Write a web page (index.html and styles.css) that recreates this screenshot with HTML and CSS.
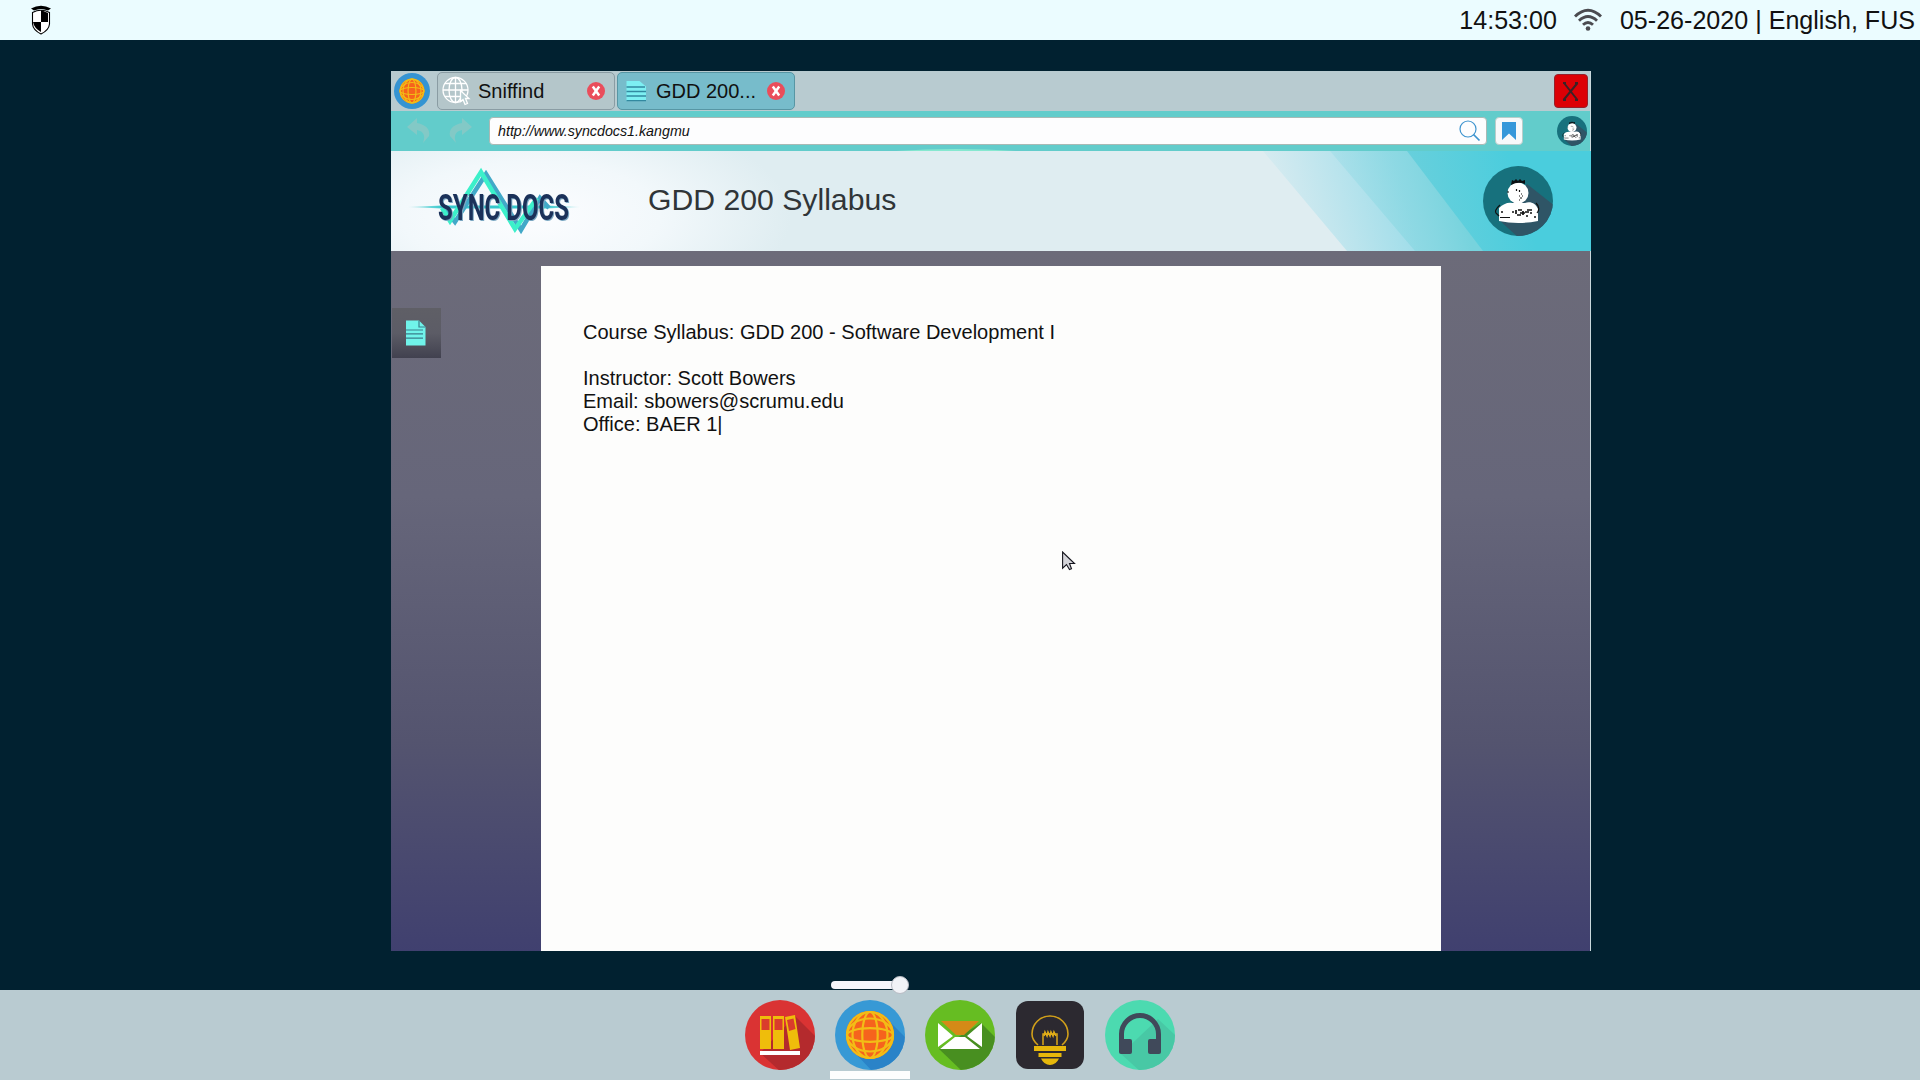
FILE: index.html
```html
<!DOCTYPE html>
<html lang="en">
<head>
<meta charset="utf-8">
<title>Sync Docs</title>
<link rel="stylesheet" href="styles.css">
</head>
<body>
<svg class="defs" width="0" height="0">
  <defs>
    <symbol id="avatar" viewBox="0 0 70 70">
      <clipPath id="disc"><circle cx="35" cy="35" r="35"/></clipPath>
      <circle cx="35" cy="35" r="35" fill="#17717d"/>
      <path clip-path="url(#disc)" d="M44 18 72 40V72H36L16 54Z" fill="#2f5566"/>
      <path d="M16 57V52V42C20 38 25 36 29 37H42C48 35 53 38 55 43V55Q35 59 16 55Z" fill="#fff"/>
      <circle cx="35" cy="27" r="10.500" fill="#fff"/>
      <path d="M28 19 29 14 31 15 33 13 35 15 37 13 39 15 42 14 42 18Q35 15 28 19Z" fill="#0a0f12"/>
      <path d="M24 26h2M33.500 23v2M36.500 24v2M38 28h1M36 30h1M39 30h1M37 32h2M36 34h1" stroke="#111" stroke-width="1.200" fill="none"/>
      <path d="M17 39Q10 45 14 48L16 50M53 37Q58 42 54 47M17 51.500H27" stroke="#111" stroke-width="1.200" fill="none"/>
      <path d="M29 46H31M33 44V48M35 44H39M34 49H38M40 45V49M42 46H46M44 44H49M43 50H45M47 47H49M37 47H42M51 51H53M18 46h2" stroke="#111" stroke-width="1.700" fill="none"/>
    </symbol>
    <symbol id="globe" viewBox="0 0 70 70">
      <circle cx="35" cy="35" r="24" fill="#f6631d"/>
      <g fill="none" stroke="#f2bd16" stroke-width="2.200">
        <circle cx="35" cy="35" r="23"/>
        <ellipse cx="35" cy="35" rx="7.700" ry="23"/>
        <ellipse cx="35" cy="35" rx="17.500" ry="23"/>
        <ellipse cx="35" cy="35" rx="23" ry="6.800"/>
        <ellipse cx="35" cy="35" rx="23" ry="16.500"/>
      </g>
    </symbol>
  </defs>
</svg>

<header class="menubar">
  <svg class="crest" width="20" height="30" viewBox="0 0 20 30">
    <path d="M0 3.500Q10-2 20 3.500L17 5.500Q10 2.500 3 5.500Z" fill="#000"/>
    <path d="M1.500 7.500Q10 3 18.500 7.500V19Q18 25 10 29Q2 25 1.500 19Z" fill="#fff" stroke="#000" stroke-width="1.100"/>
    <path d="M10 5V17H17V8ZM10 17V27Q3 23 2 17Z" fill="#000"/>
  </svg>
  <div class="status">
    <span>14:53:00</span>
    <svg class="wifi" width="28" height="24" viewBox="0 0 28 24">
      <g fill="none" stroke="#4b4b50" stroke-width="2.900">
        <path d="M1 8.500Q14-4 27 8.500M5 12.700Q14 4.300 23 12.700M9 16.700Q14 12.100 19 16.700"/>
      </g>
      <circle cx="14" cy="20.500" r="2.300" fill="#4b4b50"/>
    </svg>
    <span>05-26-2020 | English, FUS</span>
  </div>
</header>

<main class="desktop">
  <section class="window">
    <div class="tabs">
      <svg class="app" width="36" height="36" viewBox="0 0 70 70"><circle cx="35" cy="35" r="35" fill="#3594d2"/><use href="#globe"/></svg>
      <div class="tab">
        <svg width="29" height="30" viewBox="0 0 29 30" fill="none" stroke="#fff" stroke-width="1.300">
          <circle cx="13.500" cy="14" r="12.500"/><ellipse cx="13.500" cy="14" rx="6.500" ry="12.500"/>
          <path d="M1 14H26M3 7.500H24M3 20.500H24M13.500 1V27"/>
          <path d="M18.500 14.500V25.500L21 23.500 23 28.500 25.500 27.500 23.500 22.500H27Z" fill="#b7cdd1"/>
        </svg>
        <span class="label">Sniffind</span>
        <svg class="x" width="18" height="18" viewBox="0 0 18 18"><circle cx="9" cy="9" r="9" fill="#ea4d5b"/><path d="M5.800 4.500 12.200 13.500M12.200 4.500 5.800 13.500" stroke="#fff" stroke-width="2.500"/></svg>
      </div>
      <div class="tab active">
        <svg width="29" height="30" viewBox="0 0 29 30">
          <path d="M4.500 5H17.500L24 10.500V25H4.500Z" fill="#7deff2"/>
          <path d="M4.500 11H23M4.500 15.500H24M4.500 20H24M4.500 24.700H24" stroke="#3289a0" stroke-width="1.300"/>
        </svg>
        <span class="label">GDD 200...</span>
        <svg class="x" width="18" height="18" viewBox="0 0 18 18"><circle cx="9" cy="9" r="9" fill="#ea4d5b"/><path d="M5.800 4.500 12.200 13.500M12.200 4.500 5.800 13.500" stroke="#fff" stroke-width="2.500"/></svg>
      </div>
      <button class="close"><svg width="32" height="32" viewBox="0 0 32 32"><path d="M9 8 22.500 25M22.500 8 8.500 25M8 8H11M20 8H23M8 25H11M20 25H23" fill="none" stroke="#3b2226" stroke-width="2"/></svg></button>
    </div>

    <div class="toolbar">
      <svg class="arrow" width="24" height="26" viewBox="0 0 24 26"><path d="M0 9 10 0V5Q24 8 22 18L16 25Q20 14 10 12V17Z" fill="#83c9c6"/></svg>
      <svg class="arrow" width="24" height="26" viewBox="0 0 24 26"><path d="M24 9 14 0V5Q0 8 2 18L8 25Q4 14 14 12V17Z" fill="#83c9c6"/></svg>
      <div class="address">
        <span>http://www.syncdocs1.kangmu</span>
        <svg width="22" height="22" viewBox="0 0 22 22" fill="none" stroke="#3e94cf"><circle cx="9" cy="9" r="8" stroke-width="1.200"/><path d="M14.500 14.500 20.500 20.500" stroke-width="1.700"/></svg>
      </div>
      <div class="bookmark"><svg width="14" height="18" viewBox="0 0 14 18"><path d="M0 0H14V18L7 11.500 0 18Z" fill="#3698da"/></svg></div>
      <svg class="user" width="30" height="30"><use href="#avatar"/></svg>
    </div>

    <div class="banner">
      <svg class="rays" width="1200" height="102" viewBox="0 -2 1200 102">
        <defs>
          <linearGradient id="r1" gradientUnits="userSpaceOnUse" x1="860" y1="40" x2="1000" y2="0"><stop offset="0" stop-color="#a5dfec" stop-opacity="0"/><stop offset="1" stop-color="#9fdde9"/></linearGradient>
          <linearGradient id="r2" gradientUnits="userSpaceOnUse" x1="920" y1="60" x2="1060" y2="20"><stop offset="0" stop-color="#a6dfea" stop-opacity=".3"/><stop offset="1" stop-color="#77d3dd"/></linearGradient>
          <linearGradient id="r3" gradientUnits="userSpaceOnUse" x1="1010" y1="30" x2="1120" y2="0"><stop offset="0" stop-color="#6bd0dc"/><stop offset="1" stop-color="#4acddd"/></linearGradient>
        </defs>
        <path d="M872 0H1200V100H956Z" fill="url(#r1)"/>
        <path d="M939 0H1200V100H1024Z" fill="url(#r2)"/>
        <path d="M1016 0H1200V100H1092Z" fill="url(#r3)"/>
        <path d="M505 0Q565-4 625 0Z" fill="#86e8d0"/>
      </svg>
      <svg class="logo" width="180" height="80" viewBox="0 0 180 80">
        <defs><linearGradient id="pulse" x1="0" x2="1"><stop offset="0" stop-color="#35c8cc" stop-opacity=".2"/><stop offset=".2" stop-color="#35c8cc"/><stop offset=".8" stop-color="#35c8cc"/><stop offset="1" stop-color="#35c8cc" stop-opacity=".2"/></linearGradient></defs>
        <path d="M0 45 35 43.500H137L172 45 137 46.500H35Z" fill="url(#pulse)"/>
        <g fill="none" stroke-width="4.500">
          <path d="M36 46 47 60 78 12 113 68 132 36 141 46" stroke="#42a9c8"/>
          <path d="M34 46 42 59 73 10 107 67 129 36" stroke="#3cf0ca"/>
        </g>
        <text x="30" y="57.500" textLength="131" lengthAdjust="spacingAndGlyphs" fill="#1b3159">SYNC DOCS</text>
      </svg>
      <h1>GDD 200 Syllabus</h1>
      <svg class="profile" width="70" height="70"><use href="#avatar"/></svg>
    </div>

    <div class="workspace">
      <aside>
        <div class="doc-tab">
          <svg width="20" height="26" viewBox="0 0 20 26">
            <path d="M0 .5H13L19.500 7V25.500H0Z" fill="#70f3ea"/>
            <path d="M13 .5V7H19.500M0 10H17M0 13.800H17M0 18.200H17" fill="none" stroke="#3a7e8c" stroke-width="1.200"/>
          </svg>
        </div>
      </aside>
      <article class="paper">
        <p>Course Syllabus: GDD 200 - Software Development I</p>
        <p>Instructor: Scott Bowers<br>Email: sbowers@scrumu.edu<br>Office: BAER 1|</p>
      </article>
    </div>
  </section>
</main>

<footer class="dock">
  <svg width="70" height="70" viewBox="0 0 70 70">
    <circle cx="35" cy="35" r="35" fill="#da3333"/>
    <path clip-path="url(#disc)" d="M50 16 72 38V72H36L15 53Z" fill="#b42a2d"/>
    <path d="M15 16H26V49H15ZM28 16H39V49H28ZM40 17 50 15 55 48 45 50Z" fill="#efbd0b"/>
    <path d="M16.500 19H24.500V30H16.500ZM29.500 19H37.500V30H29.500ZM42 20 48.500 18.500 50.500 29 44 31Z" fill="#da3c2c"/>
    <path d="M15 51H55V55H15Z" fill="#fff"/>
  </svg>
  <div class="running">
    <svg width="70" height="70" viewBox="0 0 70 70">
      <circle cx="35" cy="35" r="35" fill="#3799d5"/>
      <path clip-path="url(#disc)" d="M52 19 72 39V72H38L19 52Z" fill="#2a83c8"/>
      <use href="#globe"/>
    </svg>
  </div>
  <svg width="70" height="70" viewBox="0 0 70 70">
    <circle cx="35" cy="35" r="35" fill="#66bd22"/>
    <path clip-path="url(#disc)" d="M56 23 72 39V72H38L14 49Z" fill="#488f20"/>
    <path d="M16 21H54L39 35H31Z" fill="#d58a17"/>
    <path d="M13 23 28 36 13 47ZM57 23V47L42 36ZM15 49 30 37H40L55 49Z" fill="#fff"/>
  </svg>
  <svg width="70" height="70" viewBox="0 0 70 70">
    <rect x="1" y="1" width="68" height="68" rx="12" fill="#2c2930"/>
    <path d="M23 45Q17 40 17 34A18 18 0 0 1 53 34Q53 40 47 45M28 45V34H42V45" fill="none" stroke="#d2a01a" stroke-width="1.600"/>
    <path d="M29 36 30 32 32 36 33 32 35 36 36 32 38 36 39 32 41 36" fill="none" stroke="#e0ad18" stroke-width="1.600"/>
    <path d="M19 46H51V51H19ZM23.500 53H46.500V57H23.500ZM26 58.500H44Q41 65 35 65Q29 65 26 58.500Z" fill="#e6b70b"/>
  </svg>
  <svg width="70" height="70" viewBox="0 0 70 70">
    <circle cx="35" cy="35" r="35" fill="#4cdab0"/>
    <path clip-path="url(#disc)" d="M53 19 72 37V72H36L16 54Z" fill="#48c8a5"/>
    <path d="M16.500 48V34A18.500 18.500 0 0 1 53.500 34V48" fill="none" stroke="#40495a" stroke-width="5"/>
    <rect x="14" y="39" width="13" height="15" rx="2" fill="#40495a"/><rect x="43" y="39" width="13" height="15" rx="2" fill="#40495a"/>
  </svg>
</footer>

<div class="volume"><i></i></div>
<svg class="cursor" width="14" height="20" viewBox="0 0 14 20"><path d="M.6 1V17.200L4.500 13.500 7.500 18.500 9.500 17.700 7.500 12.500H12.500Z" fill="#d5d5da" stroke="#16161e" stroke-width="1.100"/></svg>
</body>
</html>
```
FILE: styles.css
```css
* { box-sizing: border-box; }

body {
  margin: 0;
  width: 1920px;
  height: 1080px;
  display: flex;
  flex-direction: column;
  position: relative;
  overflow: hidden;
  background: #012130;
  color: #111;
  font-family: "Liberation Sans", Arial, sans-serif;
}

svg { display: block; flex: none; }
.defs { position: absolute; }

.menubar {
  height: 40px;
  flex: none;
  display: flex;
  align-items: center;
  justify-content: space-between;
  padding: 0 5px 0 31px;
  background: #ebfcff;
}
.status { display: flex; align-items: center; font-size: 25.080px; white-space: nowrap; }
.wifi { margin: 0 18px 0 17px; }

.desktop {
  flex: 1;
  display: flex;
  justify-content: center;
  padding: 31px 0 39px 62px;
}
.window {
  width: 1200px;
  height: 880px;
  display: flex;
  flex-direction: column;
  border-right: 1px solid #c9d8dc;
}

.tabs {
  height: 40px;
  flex: none;
  display: flex;
  align-items: center;
  background: #b8cbd0;
  padding: 0 2px 0 3px;
}
.app { margin-right: 7px; }
.tab {
  width: 178px;
  height: 38px;
  margin-right: 2px;
  padding: 0 9px 0 4px;
  display: flex;
  align-items: center;
  background: #b4c6ca;
  border: 1px solid #8a9ca3;
  border-radius: 5px;
  font-size: 20px;
}
.tab.active { background: #77bccb; border-color: #5796a4; }
.tab .label { flex: 1; padding-left: 7px; }
.tab.active .label { padding-left: 5px; }
.close {
  width: 34px;
  height: 34px;
  margin-left: auto;
  padding: 0;
  background: #dc0005;
  border: 1px solid #95202a;
  border-radius: 4px;
}

.toolbar {
  height: 40px;
  flex: none;
  display: flex;
  align-items: center;
  padding: 0 3px 0 16px;
  background: #62cccb;
}
.arrow { margin-right: 17px; }
.address {
  width: 998px;
  height: 28px;
  display: flex;
  align-items: center;
  justify-content: space-between;
  padding: 0 5px 0 8px;
  background: #fdfdfe;
  border: 1px solid #a9b9b5;
  border-radius: 4px;
  font-size: 14.250px;
  font-style: italic;
}
.bookmark {
  width: 28px;
  height: 28px;
  margin-left: 8px;
  display: grid;
  place-items: center;
  background: #f7f9fa;
  border: 1px solid #b9cdca;
  border-radius: 4px;
}
.user { margin-left: auto; }

.banner {
  height: 100px;
  flex: none;
  position: relative;
  display: flex;
  align-items: center;
  padding: 0 37px 0 17px;
  background: radial-gradient(ellipse 260px 110px at 140px 65px, #fcfdff 0%, #f2f8fb 50%, #dfedf1 100%);
}
.rays { position: absolute; left: 0; top: -2px; }
.logo { position: relative; top: 1px; overflow: visible; }
.logo text { font: bold 36.500px Roboto, sans-serif; filter: drop-shadow(1.500px 1.500px 0 #7ba7c2); }
.banner h1 {
  position: relative;
  margin: -2px 0 0 60px;
  font-size: 30.200px;
  font-weight: normal;
  color: #303538;
  white-space: nowrap;
}
.profile { position: relative; margin-left: auto; }

.workspace {
  flex: 1;
  display: flex;
  background: linear-gradient(#6c6b79 0%, #66667a 35%, #54546f 70%, #40406f 100%);
}
.workspace aside { width: 150px; padding: 57px 0 0 1px; }
.doc-tab {
  width: 49px;
  height: 50px;
  display: grid;
  place-items: center;
  padding-right: 2px;
  background: linear-gradient(#5f5f66, #5c5c66 50%, #41414f);
}
.paper {
  width: 900px;
  margin-top: 15px;
  padding: 55px 41px 0 42px;
  background: #fdfdfc;
  font-size: 20.050px;
  line-height: 23px;
}
.paper p { margin: 0 0 23px; }

.dock {
  height: 90px;
  flex: none;
  display: flex;
  justify-content: center;
  gap: 20px;
  padding-top: 10px;
  background: #b9cbd1;
}
.running { position: relative; }
.running::after {
  content: "";
  position: absolute;
  left: -5px;
  top: 71px;
  width: 80px;
  height: 8px;
  background: #fdfdfd;
}

.volume {
  position: absolute;
  left: 831px;
  top: 981px;
  width: 74px;
  height: 8px;
  background: #f4f5fa;
  border-radius: 4px;
}
.volume i {
  position: absolute;
  right: -4px;
  top: -5px;
  width: 18px;
  height: 18px;
  border-radius: 50%;
  background: #f1f3f7;
  border: 1px solid #b9bcc4;
}
.cursor { position: absolute; left: 1062px; top: 551px; }
```
